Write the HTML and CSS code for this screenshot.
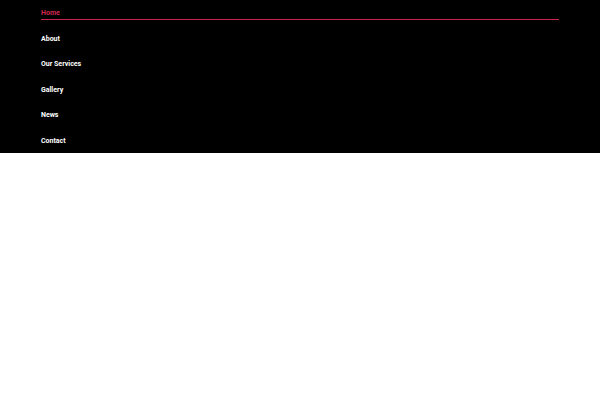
FILE: index.html
```html
<!DOCTYPE html>
<html lang="en">
<head>
<meta charset="utf-8">
<meta name="viewport" content="width=device-width, initial-scale=1">
<title>Home</title>
<link rel="stylesheet" href="styles.css">
</head>
<body>
<header class="site-header">
<nav class="nav" aria-label="Main">
<ul class="nav-list">
<li><a class="nav-link active" href="#home" aria-current="page">Home</a></li>
<li><a class="nav-link" href="#about">About</a></li>
<li><a class="nav-link" href="#services">Our Services</a></li>
<li><a class="nav-link" href="#gallery">Gallery</a></li>
<li><a class="nav-link" href="#news">News</a></li>
<li><a class="nav-link" href="#contact">Contact</a></li>
</ul>
</nav>
</header>
</body>
</html>
```
FILE: styles.css
```css
* {
  box-sizing: border-box;
}

body {
  margin: 0;
  background: #fff;
  font-family: Roboto, sans-serif;
}

.site-header {
  background: #000;
}

.nav {
  padding: 0 41px;
}

.nav-list {
  display: grid;
  grid-template-rows: repeat(6, 1fr);
  min-height: 153px;
  margin: 0;
  padding: 0;
  list-style: none;
}

.nav-link {
  display: block;
  padding-top: 7px;
  border-bottom: 1px solid transparent;
  color: #fff;
  font-size: 7px;
  font-weight: 700;
  line-height: 12px;
  text-decoration: none;
}

.nav-link.active {
  color: #d0284e;
  border-bottom-color: #c8244c;
}
```
